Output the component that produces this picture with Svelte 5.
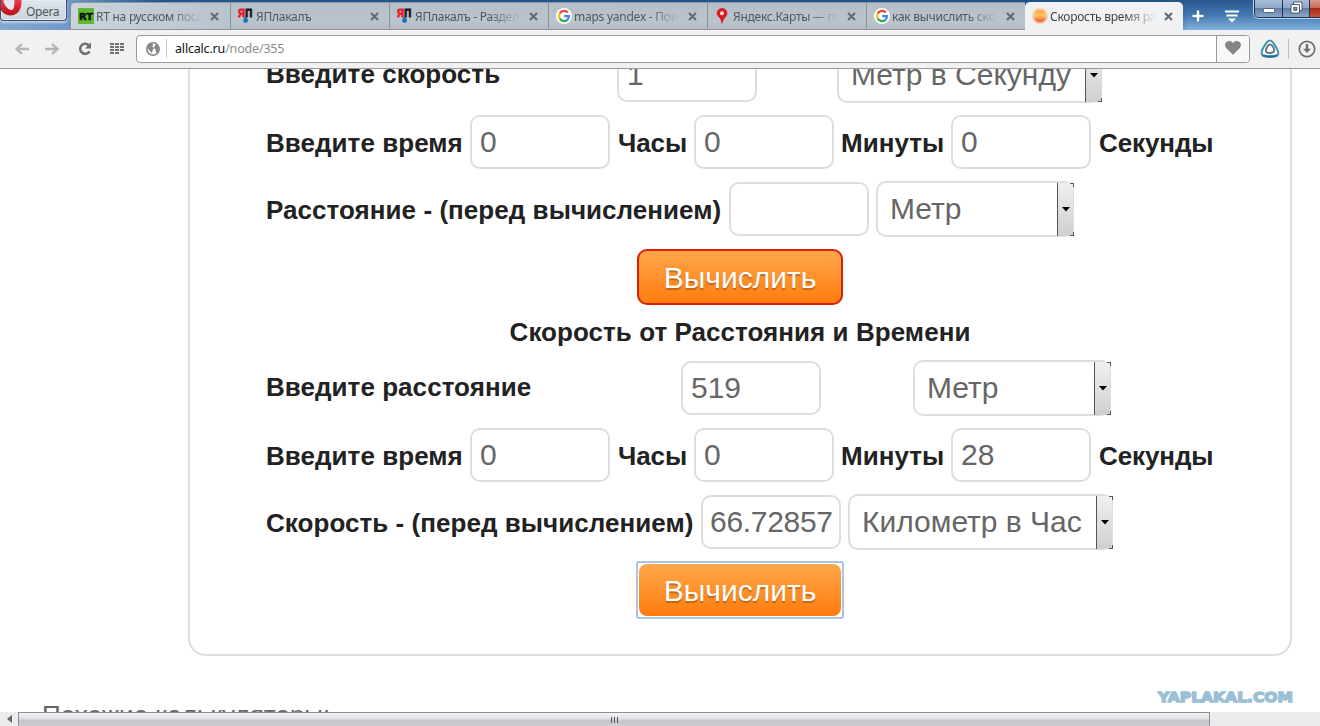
<script>
  const tabs = [
    { icon: 'rt', title: 'RT на русском посл' },
    { icon: 'yap', title: 'ЯПлакалъ' },
    { icon: 'yap', title: 'ЯПлакалъ - Раздел' },
    { icon: 'google', title: 'maps yandex - Пои' },
    { icon: 'pin', title: 'Яндекс.Карты — по' },
    { icon: 'google', title: 'как вычислить ско' },
    { icon: 'sun', title: 'Скорость время ра', active: true }
  ];
  const grid = [0, 1, 2, 3];
</script>

{#snippet tabIcon(kind)}
  <svg class="ticon" width="16" height="16" viewBox="0 0 16 16">
    {#if kind === 'rt'}
      <rect width="16" height="16" fill="#5fb832" />
      <text x="1" y="12" font-family="DejaVu Sans" font-weight="bold" font-size="9.5" textLength="14" lengthAdjust="spacingAndGlyphs" fill="#0a1404" stroke="#0a1404" stroke-width=".5">RT</text>
    {:else if kind === 'yap'}
      <text x="0" y="9" font-family="Liberation Sans" font-weight="bold" font-size="11" textLength="7" lengthAdjust="spacingAndGlyphs" fill="#e8202c" stroke="#e8202c" stroke-width=".9">Я</text>
      <text x="7.3" y="9" font-family="Liberation Sans" font-weight="bold" font-size="11" textLength="7" lengthAdjust="spacingAndGlyphs" fill="#15171a" stroke="#15171a" stroke-width=".9">П</text>
      <path d="M7.500 8.500c2 2.300 2.700 3.100 2.400 4.400a2.400 2.400 0 0 1-4.700 0C5 11.500 6 10.500 7.500 8.500z" fill="#1672b4" />
    {:else if kind === 'google'}
      <circle cx="8" cy="8" r="8" fill="#fff" />
      <g fill="none" stroke-width="2.3">
        <path d="M11.800 4.500A5 5 0 0 0 3.700 5.500" stroke="#ea4335" />
        <path d="M3.700 5.500a5 5 0 0 0 0 5" stroke="#fbbc05" />
        <path d="M3.700 10.500a5 5 0 0 0 7.700 1.300" stroke="#34a853" />
        <path d="M11.400 11.800A5 5 0 0 0 13 8.100H8.200" stroke="#4285f4" />
      </g>
    {:else if kind === 'pin'}
      <path d="M7 0a5.300 5.300 0 0 1 5.300 5.300c0 3.200-3.500 4.300-4.700 9.500-.2 1-1.200 1-1.300 0-.2-5.300-4.600-6-4.600-9.500A5.300 5.300 0 0 1 7 0z" fill="#dd1a20" />
      <circle cx="7" cy="5.300" r="2" fill="#f3e3e4" />
    {:else}
      <defs>
        <linearGradient id="sun" x1="0" y1="0" x2="0" y2="1">
          <stop offset="0" stop-color="#ff9a3a" /><stop offset=".45" stop-color="#ffc568" /><stop offset=".65" stop-color="#f79a50" /><stop offset="1" stop-color="#ee5a2a" />
        </linearGradient>
      </defs>
      <circle cx="8" cy="8" r="7.800" fill="#f6b890" />
      <circle cx="8" cy="8" r="6.900" fill="url(#sun)" stroke="#fff3e6" stroke-width=".7" />
    {/if}
  </svg>
{/snippet}

{#snippet select(text)}
  <div class="select"><span>{text}</span><i><svg width="8" height="5" viewBox="0 0 8 5"><path d="M0 0h8L4 4.500z" fill="#000" /></svg></i></div>
{/snippet}

{#snippet timeRow(h, m, s)}
  <div class="row time">
    <b>Введите время</b><div class="input">{h}</div>
    <b>Часы</b><div class="input">{m}</div>
    <b>Минуты</b><div class="input">{s}</div>
    <b>Секунды</b>
  </div>
{/snippet}

<div class="window">
  <header>
    <div class="opera">
      <svg width="23" height="17" viewBox="0 0 23 17">
        <defs><linearGradient id="op" x1="0" y1="0" x2="0" y2="1"><stop offset="0" stop-color="#f0606a" /><stop offset=".7" stop-color="#d8222e" /><stop offset="1" stop-color="#b5101c" /></linearGradient></defs>
        <path d="M-3-4C-3-12 20-12 20.500 0S15 15.500 9 15.500-3 10-3-1z" fill="url(#op)" />
        <path d="M2-3c0-8 11-8 11.500 1 0 8-.5 12-3 12S2 6 2-3z" fill="#e5e9ed" />
      </svg>
      <span>Opera</span>
    </div>
    <div class="tabs">
      {#each tabs as t}
        <div class="tab" class:active={t.active}>
          {@render tabIcon(t.icon)}
          <span class="title">{t.title}</span>
          <svg class="close" width="9" height="9" viewBox="0 0 9 9"><path d="M1 1l7 7M8 1l-7 7" stroke="#626a70" stroke-width="2" /></svg>
        </div>
      {/each}
    </div>
    <div class="actions">
      <svg width="12" height="12" viewBox="0 0 12 12"><path d="M6 .5v11M.5 6h11" stroke="#1c4068" stroke-width="4.500" opacity=".35" /><path d="M6 .5v11M.5 6h11" stroke="#fff" stroke-width="2.500" /></svg>
      <svg width="14" height="13" viewBox="0 0 14 13"><path d="M0 1.500h14M1.500 5.500h11" stroke="#fff" stroke-width="2" /><path d="M3 8.500h8L7 12.500z" fill="#fff" /></svg>
    </div>
    <div class="wincontrols">
      <span class="min"><svg width="12" height="5" viewBox="0 0 12 5"><rect x=".5" y=".5" width="11" height="4" rx="1" fill="#fff" stroke="#50627a" /></svg></span>
      <span class="max"><svg width="13" height="13" viewBox="0 0 13 13"><path d="M3.500 1h8.500v8.500H3.500z" fill="#fff" stroke="#4c5b70" /><path d="M1 3.500h8.500V12H1z" fill="#fff" stroke="#4c5b70" /><path d="M3.800 6.300h3v3h-3z" fill="#7b93b0" stroke="#4c5b70" /></svg></span>
      <span class="quit"></span>
    </div>
  </header>

  <nav>
    <div class="navicons">
      <svg width="14" height="12" viewBox="0 0 14 12"><path d="M7 1L1.500 6 7 11M2 6h12" fill="none" stroke="#b5b5b5" stroke-width="2.300" /></svg>
      <svg width="14" height="12" viewBox="0 0 14 12"><path d="M7 1l5.500 5L7 11M12 6H0" fill="none" stroke="#b5b5b5" stroke-width="2.300" /></svg>
      <svg width="14" height="14" viewBox="0 0 14 14"><path d="M10.800 3.300A5 5 0 1 0 11.500 9.300" fill="none" stroke="#707070" stroke-width="2.600" /><path d="M13 .5v6H7z" fill="#707070" /></svg>
      <svg width="14" height="11" viewBox="0 0 14 11">
        {#each grid.slice(0, 3) as c}{#each grid as r}{#if !(c === 2 && r === 3)}<rect x={c * 5} y={r * 3} width="4" height="2" fill="#707070" />{/if}{/each}{/each}
      </svg>
    </div>
    <div class="address">
      <svg width="14" height="14" viewBox="0 0 14 14"><circle cx="7" cy="7" r="6.200" fill="#fff" stroke="#858585" stroke-width="1.600" /><path d="M1.500 5l3-3.200 3 .7-1.200 2L8 6 6.500 8.500 6 11.500 4 9 2 7zM8.500 4l2-2 2.500 4-1 4-2 .5-.5-3L8 6z" fill="#858585" /></svg>
      <span class="url"><em>allcalc.ru</em>/node/355</span>
      <div class="heart"><svg width="16" height="14" viewBox="0 0 16 14"><path d="M8 13.800L1.300 7.200C-.5 5.200-.2 2.300 1.600 1 3.700-.6 6.600-.2 8 2.200 9.400-.2 12.300-.6 14.400 1c1.800 1.300 2.100 4.200.3 6.200z" fill="#858585" /></svg></div>
    </div>
    <svg class="ext" width="20" height="19" viewBox="0 0 20 19">
      <path d="M10 1.500C13 1.500 19.500 13 18 15.500S4 19 2 15.500 7 1.500 10 1.500z" fill="#fff" stroke="#3b8fb5" stroke-width="2" />
      <path d="M3 16.300c4 1.500 10 1.500 14 0" fill="none" stroke="#246f9c" stroke-width="2.500" />
      <path d="M10 5.500c2.500 0 4.500 4 4 6.500s-8 2.500-8 0 1.500-6.500 4-6.500z" fill="#fff" stroke="#67757c" stroke-width="2" />
    </svg>
    <i class="sep"></i>
    <svg class="down" width="18" height="18" viewBox="0 0 18 18"><circle cx="9" cy="9" r="7.700" fill="none" stroke="#6e6e6e" stroke-width="1.700" /><path d="M9 4v6" stroke="#6e6e6e" stroke-width="2.400" /><path d="M5 8.800h8L9 13z" fill="#6e6e6e" /></svg>
  </nav>

  <main>
    <section class="card">
      <div class="row speed"><b>Введите скорость</b><div class="input">1</div>{@render select('Метр в Секунду')}</div>
      {@render timeRow('0', '0', '0')}
      <div class="row distres"><b>Расстояние - (перед вычислением)</b><div class="input"></div>{@render select('Метр')}</div>
      <button class="red">Вычислить</button>
      <h3>Скорость от Расстояния и Времени</h3>
      <div class="row dist"><b>Введите расстояние</b><div class="input">519</div>{@render select('Метр')}</div>
      {@render timeRow('0', '0', '28')}
      <div class="row speedres"><b>Скорость - (перед вычислением)</b><div class="input">66.72857</div>{@render select('Километр в Час')}</div>
      <button class="focus">Вычислить</button>
    </section>
    <div class="related">Похожие калькуляторы:</div>
    <svg class="mark" width="138" height="16" viewBox="0 0 138 16"><text x="1" y="13" font-family="DejaVu Sans" font-weight="bold" font-size="14" textLength="135" lengthAdjust="spacingAndGlyphs" fill="#9bbfd6" stroke="#9bbfd6" stroke-width="1.400">YAPLAKAL.COM</text></svg>
  </main>

  <footer>
    <div class="arrow"><svg width="5" height="8" viewBox="0 0 5 8"><path d="M5 0v8L0 4z" fill="#666" /></svg></div>
    <div class="thumb"><i></i><i></i><i></i></div>
  </footer>
</div>

<style>
  :global(body) { margin: 0; overflow: hidden; }
  * { box-sizing: border-box; }
  svg { display: block; flex: none; }
  .window { width: 1320px; height: 726px; display: flex; flex-direction: column; overflow: hidden; background: #fff; font-family: "Liberation Sans", Arial, sans-serif; }

  header { height: 30px; flex: none; display: flex; background: linear-gradient(90deg, #86a8cf 0, #7299c6 5%, #23568c 12%, #20528a 88%, transparent 90%), linear-gradient(#28588d 0, #4379b0 50%, #84b1e0 100%); font-family: "Noto Sans", sans-serif; }
  .opera { width: 67px; height: 21px; flex: none; display: flex; margin-right: 3px; border: 1px solid #41526a; border-top: 0; border-radius: 0 0 4px 4px; background: linear-gradient(#dfe5eb, #ccd4dd); font-size: 12px; color: #4e565e; box-shadow: inset 0 0 0 1px #e4eaf2, 0 2px 2px #b6d0ec; overflow: hidden; }
  .opera span { margin: 3px 0 0 2px; letter-spacing: -.35px; line-height: 17px; }
  .tabs { display: flex; flex: none; width: 1113px; padding-top: 2px; }
  .tab { width: 159px; flex: none; display: flex; align-items: center; padding: 0 11px 0 7px; border-left: 1px solid #89939e; border-top: 1px solid #8b98a6; background: linear-gradient(#b4bfc9, #bcc4cb 70%, #b4bbc2); border-bottom: 1px solid #8d969d; }
  .tab:first-child { width: 160px; border-radius: 5px 0 0 0; background: linear-gradient(90deg, #cbd4dc, #b9c3cc); }
  .tab.active { width: 158px; padding-left: 6px; background: #f0f1f2; border-color: #f0f1f2; border-radius: 5px 5px 0 0; }
  .title { flex: none; margin-left: 2px; padding-top: 1px; width: 106px; overflow: hidden; white-space: nowrap; font-size: 12px; letter-spacing: -.25px; line-height: 18px; color: #50575d; mask-image: linear-gradient(90deg, #000 70%, transparent 100%); }
  .active .title { color: #444; }
  .close { margin-left: 8px; }
  .actions { width: 70px; flex: none; display: flex; gap: 21px; padding: 10px 0 0 9px; }
  .wincontrols { flex: 1; height: 18px; display: flex; margin-left: 1px; border: 1px solid #1d3553; border-top: 0; border-right: 0; border-radius: 0 0 0 5px; box-shadow: 0 0 0 1px #bcd4ee; overflow: hidden; }
  .wincontrols span { display: flex; justify-content: center; background: linear-gradient(#aabdd5 0, #8fa8c8 45%, #5f7fa6 50%, #8ba8cb 100%); }
  .min { width: 28px; padding-top: 8px; border-right: 1px solid #1d3553; }
  .max { width: 27px; padding-top: 1px; border-right: 1px solid #1d3553; }
  .wincontrols .quit { flex: 1; background: linear-gradient(#d99a8c 0, #c66a56 45%, #a62c17 50%, #c3543a 100%); }

  nav { height: 39px; flex: none; display: flex; align-items: center; background: #f1f1f1; border-bottom: 1px solid #9a9a9a; padding: 0 4px 0 15px; }
  .navicons { width: 121px; display: flex; align-items: center; gap: 16px; flex: none; margin-top: -1px; }
  .navicons svg:nth-child(3) { margin-left: 3px; }
  .navicons svg:nth-child(4) { margin-left: 2px; }
  .address { width: 1114px; height: 28px; flex: none; display: flex; align-items: center; border: 1px solid #999; border-radius: 4px; background: #fff; padding-left: 9px; overflow: hidden; margin-top: -1px; }
  .url { margin-left: 6px; height: 19px; flex: 1; border-left: 1px solid #ccc; padding-left: 8px; font: 12.500px/19px "Noto Sans", sans-serif; letter-spacing: -.18px; color: #8b8b8b; }
  .url em { font-style: normal; color: #111; }
  .heart { width: 33px; height: 28px; display: flex; align-items: center; justify-content: center; border-left: 1px solid #999; background: #f7f8f9; }
  .heart svg { margin-top: -2px; }
  .ext { margin-left: 10px; margin-top: -2px; }
  .sep { width: 1px; height: 20px; background: #bdbdbd; margin: 0 9px 0 8px; }
  .down { margin-top: -1px; }

  main { flex: none; height: 643px; position: relative; overflow: hidden; }
  .card { margin: -100px 0 0 188px; width: 1104px; height: 687px; border: 2px solid #ddd; border-radius: 18px; padding: 77px 76px 0; display: flex; flex-direction: column; }
  .row { height: 54px; flex: none; margin-bottom: 13px; display: grid; align-items: center; color: #222; white-space: nowrap; }
  b, h3 { font-size: 26px; line-height: 30px; letter-spacing: .05px; color: #222; }
  .time b, .distres b, .speedres b { padding-top: 2px; }
  .speed b, .dist b { padding-bottom: 2px; }
  .time { grid-template-columns: 204px 148px 76px 147px 110px 148px 1fr; }
  .time b:nth-of-type(2), .time b:nth-of-type(4) { letter-spacing: -.1px; }
  .speed { grid-template-columns: 351px 220px 265px; }
  .dist { grid-template-columns: 415px 232px 198px; }
  .distres { grid-template-columns: 463px 147px 198px; }
  .speedres { grid-template-columns: 435px 147px 265px; }
  .input { width: 140px; height: 54px; border: 2px solid #ddd; border-radius: 10px; padding: 0 8px; font-size: 30px; line-height: 49px; color: #666; }
  .speedres .input { padding: 0 7px; letter-spacing: -.3px; }
  .select { height: 56px; margin: -1px 0; border: 2px solid #ddd; border-radius: 10px; display: flex; justify-content: space-between; color: #666; font-size: 30px; line-height: 51px; padding-left: 12px; background: #fff; }
  .select i { width: 17px; margin: 0 -2px -1px 0; flex: none; border-left: 1px solid #555; background: linear-gradient(90deg, #555, #555) 100% 0 / 4px 1px no-repeat, linear-gradient(#555, #555) 100% 0 / 1px 4px no-repeat, linear-gradient(#555, #555) 100% 100% / 4px 1px no-repeat, linear-gradient(#555, #555) 100% 100% / 1px 4px no-repeat, linear-gradient(#ddd, #ddd) 100% 0 / 1px 100% no-repeat, linear-gradient(#f0f0f0, #dedede 55%, #cfcfcf); display: flex; align-items: center; justify-content: center; }
  button { align-self: center; width: 206px; height: 56px; flex: none; padding: 0; font: 30px/50px "Liberation Sans", Arial, sans-serif; color: #fff; text-shadow: 0 2px 1px rgba(0,0,0,.25); background: linear-gradient(#ffa84c, #ff7b0d) border-box; border: 2px solid #d8200c; border-radius: 10px; padding-top: 1px; }
  .focus { height: 58px; width: 208px; border: 2px solid #a9c6ea; border-radius: 3px; background: #fff; margin-top: -1px; position: relative; z-index: 0; }
  .focus::before { content: ""; position: absolute; z-index: -1; inset: 1px; border-radius: 8px; background: linear-gradient(#ffa84c, #ff7b0d); }
  h3 { text-align: center; margin: 12px 0 14px; height: 30px; flex: none; }
  .related { margin: 44px 0 0 42px; font-size: 26px; line-height: 30px; color: #666; white-space: nowrap; }
  .mark { position: absolute; left: 1157px; top: 620px; }

  footer { height: 14px; flex: none; display: flex; background: #ececec; }
  .arrow { width: 18px; display: flex; align-items: center; justify-content: center; }
  .thumb { width: 1192px; border: 1px solid #8d8d93; border-bottom: 0; border-radius: 1px; background: linear-gradient(#f2f2f4 0, #e1e1e5 45%, #c6c6cc 55%, #cdcdd2 100%); display: flex; gap: 2px; justify-content: center; padding-top: 4px; }
  .thumb i { width: 1px; height: 6px; background: #55555c; }
</style>
